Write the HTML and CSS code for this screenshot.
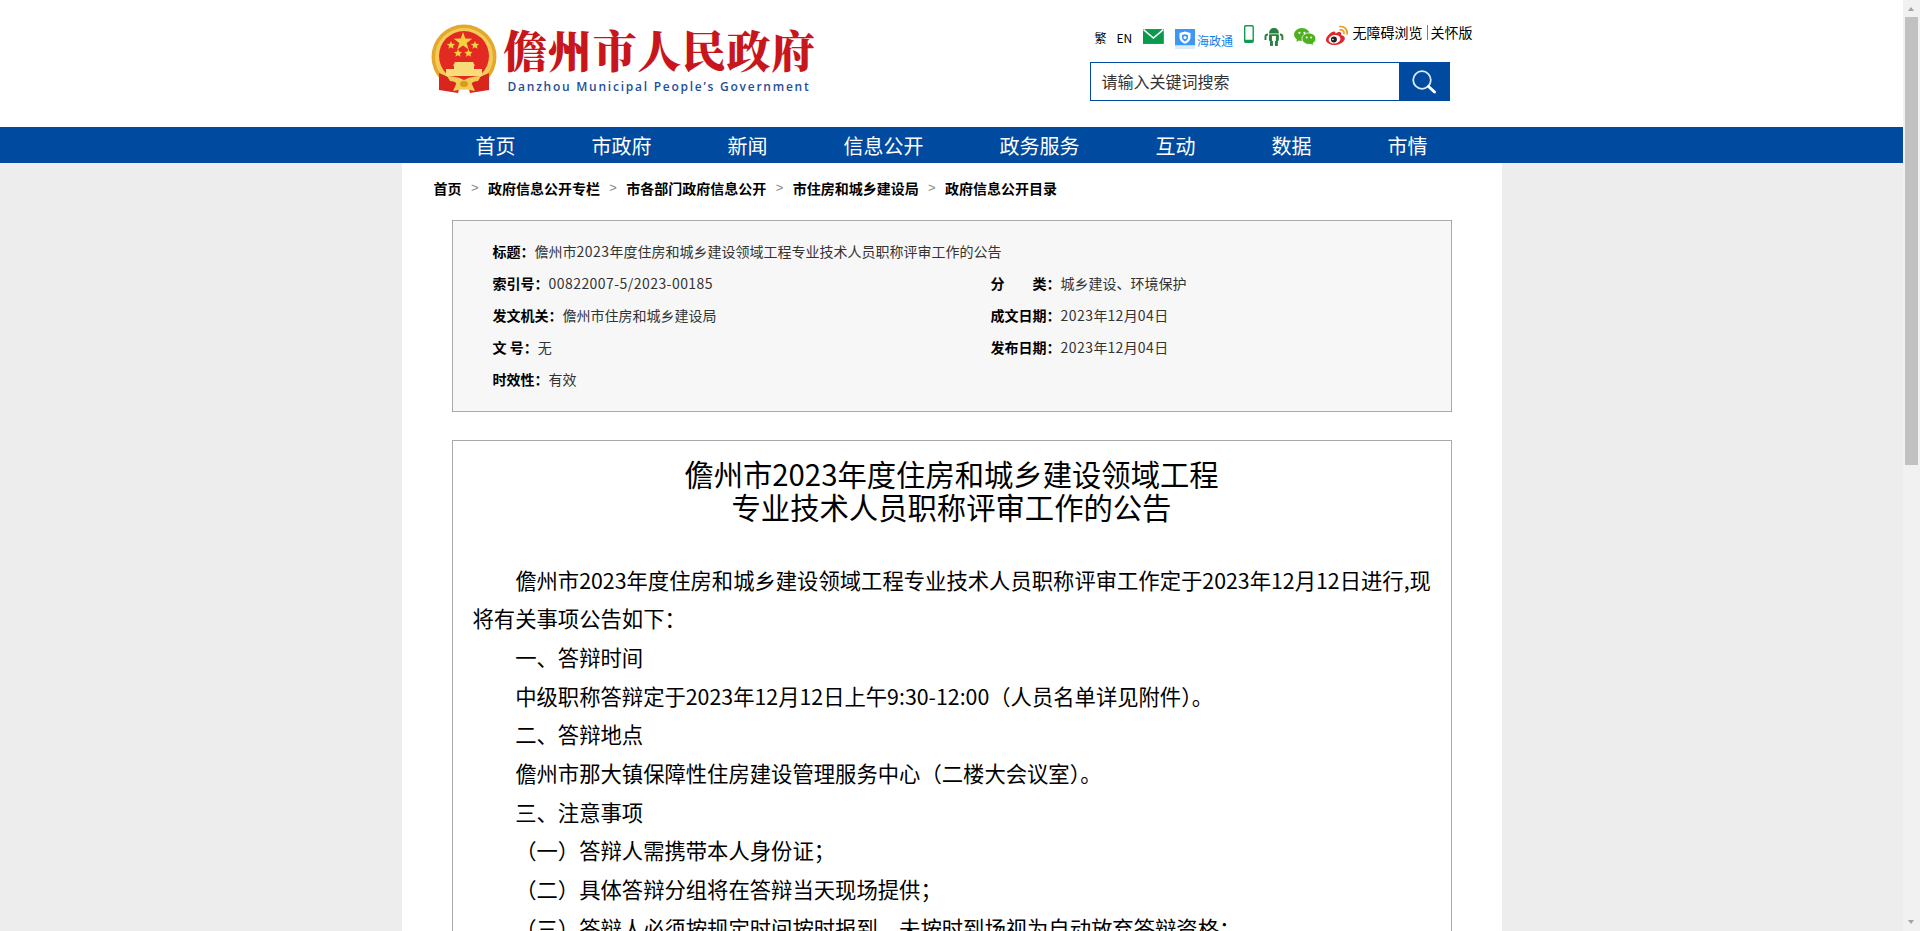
FILE: index.html
```html
<!DOCTYPE html>
<html lang="zh-CN">
<head>
<meta charset="utf-8">
<title>儋州市人民政府</title>
<link rel="stylesheet" href="styles.css">
</head>
<body>
<div class="page">
  <header class="header">
    <div class="header-inner">
      <a class="logo">
        <svg class="emblem" viewBox="0 0 66 70" width="66" height="70">
          <circle cx="33" cy="33" r="32.5" fill="#e3a92c"/>
          <circle cx="33" cy="33" r="29" fill="#f3cc58"/>
          <circle cx="33" cy="32" r="25" fill="#e32a22"/>
          <path fill="#f5d040" d="M32 8l2.3 6.6 7 .1-5.6 4.2 2 6.7-5.7-4-5.7 4 2-6.7-5.6-4.2 7-.1z"/>
          <path fill="#f5d040" d="M20 17l1.2 2.7 2.9.3-2.2 1.9.7 2.9-2.6-1.5-2.6 1.5.7-2.9-2.2-1.9 2.9-.3z"/>
          <path fill="#f5d040" d="M44 17l1.2 2.7 2.9.3-2.2 1.9.7 2.9-2.6-1.5-2.6 1.5.7-2.9-2.2-1.9 2.9-.3z"/>
          <path fill="#f5d040" d="M27 25l1.2 2.7 2.9.3-2.2 1.9.7 2.9-2.6-1.5-2.6 1.5.7-2.9-2.2-1.9 2.9-.3z"/>
          <path fill="#f5d040" d="M37.500 25l1.2 2.7 2.9.3-2.2 1.900.7 2.900-2.600-1.500-2.600 1.500.7-2.900-2.200-1.900 2.900-.3z"/>
          <path fill="#f7dc7a" d="M24 38h18l2 4h-1v3h8v7H15v-7h8v-3h-1z"/>
          <path fill="#d8261f" d="M8 49l9 4 12 9-2 7-19-3zM58 49l-9 4-12 9 2 7 19-3z"/>
          <path fill="#f3cc58" d="M16 52c6 0 11 1 17 4 6-3 11-4 17-4l-3 5-7 1 4 9-11-2-11 2 4-9-7-1z"/>
          <ellipse cx="33" cy="60" rx="4" ry="3" fill="#d99a20"/>
        </svg>
        <span class="logo-text">
          <span class="logo-cn">儋州市人民政府</span>
          <span class="logo-en">Danzhou Municipal People’s Government</span>
        </span>
      </a>
      <div class="tools">
        <div class="tool-row">
          <a class="tool-text tool-fan">繁</a>
          <a class="tool-text tool-en">EN</a>
          <svg class="ic-mail" viewBox="0 0 21 15" width="21" height="15">
            <rect width="21" height="15" fill="#0a9a4b"/>
            <path d="M0.500 0.500L10.500 9l10-8.500" fill="none" stroke="#fff" stroke-width="1.600"/>
          </svg>
          <a class="hzt">
            <svg viewBox="0 0 20 20" width="20" height="20">
              <rect width="20" height="16.500" fill="#3d97f6"/>
              <rect y="16.500" width="20" height="3.500" fill="#dcebfb"/>
              <path d="M10 2.500l5.500 1.500v4.500c0 3-2.500 5-5.500 6.200-3-1.200-5.500-3.200-5.500-6.200V4z" fill="#fff"/>
              <path d="M10 5.200l3 .9v2.700c0 1.700-1.400 2.900-3 3.700-1.600-.8-3-2-3-3.700V6.100z" fill="#3d97f6"/>
              <circle cx="10" cy="8.500" r="1.500" fill="#fff"/>
            </svg>
            <span>海政通</span>
          </a>
          <svg class="ic-phone" viewBox="0 0 10 18" width="10" height="18">
            <rect x="0.700" y="0.700" width="8.600" height="16.600" rx="1.200" fill="none" stroke="#109a50" stroke-width="1.400"/>
            <rect x="1" y="14.800" width="8" height="2.500" fill="#109a50"/>
          </svg>
          <svg class="ic-robot" viewBox="0 0 20 19" width="20" height="19">
            <path fill="#2a8140" d="M5 6.500C5 3 7 1 10 1s5 2 5 5.500z"/>
            <rect x="5" y="7.300" width="10" height="6.700" rx="1" fill="#2a8140"/>
            <rect x="8" y="9" width="4" height="5" fill="#fff"/>
            <rect x="6" y="14" width="3" height="5" fill="#2a8140"/>
            <rect x="11" y="14" width="3" height="5" fill="#2a8140"/>
            <path d="M1.500 13V9.500Q1.500 7.500 4 7.500M18.500 13V9.500Q18.500 7.500 16 7.500" stroke="#2a8140" stroke-width="2" fill="none"/>
          </svg>
          <svg class="ic-wechat" viewBox="0 0 22 17" width="22" height="17">
            <ellipse cx="8" cy="6.500" rx="8" ry="6.500" fill="#4eb01f"/>
            <path d="M3 10l-.5 4 4-2.500z" fill="#4eb01f"/>
            <circle cx="5.500" cy="4.800" r="1.100" fill="#fff"/>
            <circle cx="10.500" cy="4.800" r="1.100" fill="#fff"/>
            <ellipse cx="15" cy="10.700" rx="7" ry="5.800" fill="#4eb01f" stroke="#fff" stroke-width="0.800"/>
            <path d="M18.500 14.500l1 2.500-3.500-1.500z" fill="#4eb01f"/>
            <circle cx="12.800" cy="9.500" r="1" fill="#fff"/>
            <circle cx="17.300" cy="9.500" r="1" fill="#fff"/>
          </svg>
          <svg class="ic-weibo" viewBox="0 0 23 21" width="23" height="21">
            <path fill="#e2262a" d="M9.500 8.500c2-1.500 5-2.300 5.800-.6.300.7.100 1.500-.2 2.100 2.500.5 3.900 1.700 3.900 3.300 0 3-4.300 6.700-9.800 6.700C4.300 20 0 18 0 14.700c0-2 1.500-4.100 3.700-6C6 6.700 8.300 6 9.200 6.900c.5.500.5 1 .3 1.600z"/>
            <ellipse cx="8.600" cy="14.300" rx="6" ry="4.300" fill="#fff" transform="rotate(-10 8.600 14.300)"/>
            <circle cx="8" cy="14.500" r="3" fill="#222"/>
            <circle cx="7" cy="14.500" r="0.800" fill="#fff"/>
            <path d="M14 1.500c4.500-.7 8 3 7.300 7.500M14.500 4.800c2.300-.3 4 1.500 3.600 3.700" fill="none" stroke="#f39a1e" stroke-width="1.700" stroke-linecap="round"/>
          </svg>
          <a class="tool-text tool-access">无障碍浏览</a>
          <a class="tool-text tool-care">关怀版</a>
        </div>
        <form class="search">
          <div class="search-input">请输入关键词搜索</div>
          <div class="search-btn">
            <svg viewBox="0 0 26 26" width="26" height="26">
              <circle cx="11" cy="11" r="8.800" fill="none" stroke="#dfe9f5" stroke-width="1.800"/>
              <path d="M17.500 17.500l6 5.500" stroke="#fff" stroke-width="3" stroke-linecap="round"/>
            </svg>
          </div>
        </form>
      </div>
    </div>
  </header>

  <nav class="nav">
    <div class="nav-inner">
      <a>首页</a><a>市政府</a><a>新闻</a><a>信息公开</a><a>政务服务</a><a>互动</a><a>数据</a><a>市情</a>
    </div>
  </nav>

  <main class="main">
    <div class="crumbs">
      <a>首页</a><i>&gt;</i><a>政府信息公开专栏</a><i>&gt;</i><a>市各部门政府信息公开</a><i>&gt;</i><a>市住房和城乡建设局</a><i>&gt;</i><a>政府信息公开目录</a>
    </div>

    <section class="meta">
      <div class="meta-wide"><b>标题：</b>儋州市<span class="num">2023</span>年度住房和城乡建设领域工程专业技术人员职称评审工作的公告</div>
      <div><b>索引号：</b><span class="num">00822007-5/2023-00185</span></div>
      <div><b>分&emsp;&emsp;类：</b>城乡建设、环境保护</div>
      <div><b>发文机关：</b>儋州市住房和城乡建设局</div>
      <div><b>成文日期：</b><span class="num">2023</span>年<span class="num">12</span>月<span class="num">04</span>日</div>
      <div><b>文 号：</b>无</div>
      <div><b>发布日期：</b><span class="num">2023</span>年<span class="num">12</span>月<span class="num">04</span>日</div>
      <div><b>时效性：</b>有效</div>
    </section>

    <article class="article">
      <h1>儋州市2023年度住房和城乡建设领域工程<br>专业技术人员职称评审工作的公告</h1>
      <p>儋州市2023年度住房和城乡建设领域工程专业技术人员职称评审工作定于2023年12月12日进行,现将有关事项公告如下：</p>
      <p>一、答辩时间</p>
      <p>中级职称答辩定于2023年12月12日上午9:30-12:00（人员名单详见附件）。</p>
      <p>二、答辩地点</p>
      <p>儋州市那大镇保障性住房建设管理服务中心（二楼大会议室）。</p>
      <p>三、注意事项</p>
      <p>（一）答辩人需携带本人身份证；</p>
      <p>（二）具体答辩分组将在答辩当天现场提供；</p>
      <p>（三）答辩人必须按规定时间按时报到，未按时到场视为自动放弃答辩资格；</p>
    </article>
  </main>
</div>
<aside class="scrollbar">
  <span class="arrow-up"></span>
  <span class="thumb"></span>
  <span class="arrow-down"></span>
</aside>
</body>
</html>
```
FILE: styles.css
```css
html, body { margin: 0; height: 931px; overflow: hidden; }
body {
  display: flex;
  background: #ededed;
  color: #000;
  font-family: "Noto Sans CJK SC", "Microsoft YaHei", sans-serif;
}
a { color: inherit; text-decoration: none; }

.page { flex: 1; min-width: 0; height: 931px; overflow: hidden; }

/* header */
.header { background: #fff; height: 127px; }
.header-inner {
  width: 1100px;
  margin: 0 auto;
  display: flex;
  justify-content: space-between;
  box-sizing: border-box;
  padding: 24px 29px 0 29px;
}
.logo { display: flex; align-items: flex-start; gap: 7px; }
.emblem { display: block; }
.logo-text { display: flex; flex-direction: column; }
.logo-cn {
  font-family: "Noto Serif CJK SC", "Noto Sans CJK SC", serif;
  font-size: 44px;
  line-height: 48px;
  letter-spacing: 0.6px;
  font-weight: 900;
  color: #c8161d;
  margin-top: 1px;
}
.logo-en {
  font-family: "Open Sans", "Liberation Sans", sans-serif;
  font-size: 12px;
  line-height: 16px;
  letter-spacing: 1.75px;
  font-weight: 600;
  color: #1f4f96;
  margin: 6px 0 0 4px;
  white-space: nowrap;
}

.tools { width: 383px; display: flex; flex-direction: column; margin-top: 1px; }
.tool-row { display: flex; align-items: flex-start; height: 37px; white-space: nowrap; }
.tool-text { line-height: 16px; }
.tool-fan { font-size: 12px; margin: 5px 0 0 5px; }
.tool-en { font-size: 12px; margin: 5px 0 0 10px; }
.ic-mail { margin: 4px 0 0 11px; }
.hzt { display: flex; margin: 4px 0 0 11px; color: #0f7ff0; font-size: 12px; line-height: 16px; }
.hzt span { margin: 4px 0 0 2px; }
.ic-phone { margin: 0 0 0 11px; }
.ic-robot { margin: 2px 0 0 10px; }
.ic-wechat { margin: 3px 0 0 10px; }
.ic-weibo { margin: 0 0 0 10px; }
.tool-access { font-size: 14px; margin: -2px 0 0 4px; line-height: 18px; }
.tool-care {
  font-size: 14px;
  margin: -2px 0 0 6px;
  line-height: 18px;
  padding-left: 2px;
  position: relative;
}
.tool-care::before {
  content: "";
  position: absolute;
  left: -2px;
  top: 2px;
  width: 1px;
  height: 15px;
  background: #b8741a;
}

.search {
  width: 360px;
  height: 39px;
  display: flex;
  box-sizing: border-box;
  border: 1px solid #004a9f;
  background: #fff;
}
.search-input {
  flex: 1;
  padding-left: 11px;
  font-size: 16px;
  line-height: 37px;
  color: #333;
}
.search-btn {
  width: 50px;
  background: #004a9f;
  display: flex;
  align-items: center;
  justify-content: center;
}

/* nav */
.nav { background: #004a9f; height: 36px; }
.nav-inner {
  width: 1100px;
  margin: 0 auto;
  box-sizing: border-box;
  padding: 1px 0 0 74px;
  display: flex;
  gap: 76px;
  color: #fff;
  font-size: 20px;
  line-height: 35px;
}

/* main column */
.main {
  width: 1100px;
  margin: 0 auto;
  background: #fff;
  box-sizing: border-box;
  padding: 0 50px;
  height: 768px;
}
.crumbs {
  display: flex;
  align-items: center;
  margin-left: -18px;
  height: 57px;
  padding-bottom: 8px;
  box-sizing: border-box;
  font-size: 14px;
  font-weight: 700;
  white-space: nowrap;
}
.crumbs i {
  font-style: normal;
  font-weight: 400;
  font-family: "Liberation Sans", sans-serif;
  color: #888;
  width: 26.4px;
  text-align: center;
  font-size: 13px;
}

.meta {
  box-sizing: border-box;
  width: 1000px;
  height: 192px;
  border: 1px solid #aaa;
  background: #f7f7f7;
  padding: 14px 0 0 40px;
  display: grid;
  grid-template-columns: 498px 1fr;
  grid-auto-rows: 32.1px;
  font-size: 14px;
  line-height: 32px;
  color: #333;
  white-space: nowrap;
}
.meta b { color: #000; font-weight: 700; }
.meta-wide { grid-column: 1 / -1; }
.num { letter-spacing: 0.45px; }

.article {
  box-sizing: border-box;
  width: 1000px;
  margin-top: 28px;
  border: 1px solid #aaa;
  background: #fff;
  padding: 16px 20px 0;
  height: 600px;
}
.article h1 {
  margin: 0 0 37.5px;
  text-align: center;
  font-size: 29.33px;
  line-height: 33px;
  font-weight: 400;
}
.article p {
  margin: 0 -3px 0 0;
  font-size: 21.33px;
  line-height: 38.7px;
  text-indent: 2em;
}

/* window scrollbar */
.scrollbar {
  flex: 0 0 17px;
  height: 931px;
  background: #f1f1f1;
  position: relative;
}
.thumb {
  position: absolute;
  left: 2px;
  right: 2px;
  top: 17px;
  height: 448px;
  background: #c1c1c1;
}
.arrow-up, .arrow-down {
  position: absolute;
  left: 5px;
  width: 0;
  height: 0;
  border-left: 3.5px solid transparent;
  border-right: 3.5px solid transparent;
}
.arrow-up { top: 7px; border-bottom: 4px solid #a3a3a3; }
.arrow-down { bottom: 7px; border-top: 4px solid #a3a3a3; }
```
